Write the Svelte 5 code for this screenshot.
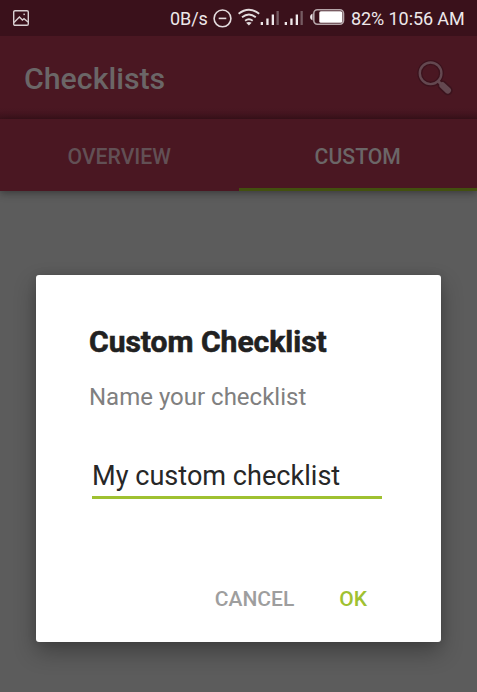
<script>
  let name = $state('My custom checklist');
</script>

<div class="screen">
  <div class="status">
    <svg class="pic" width="16" height="16" viewBox="0 0 16 16" fill="none" stroke="#d8cfd1" stroke-width="1.4">
      <rect x=".7" y=".7" width="14.6" height="14.6" rx="1.3" />
      <path d="M1 12.5 6.4 7l3 3 1.6-1.3 4 3.3" />
      <rect x="10.4" y="3.6" width="1.5" height="1.5" fill="#d8cfd1" stroke="none" />
    </svg>
    <span class="speed">0B/s</span>
    <svg class="icons" width="135" height="22" viewBox="212 7 135 22">
      <g fill="none" stroke="#e4dcde" stroke-width="1.6">
        <circle cx="222.5" cy="18.4" r="8.4" />
        <path d="M218.7 18.4h7.6" />
        <path d="M238.6 13.7q10.3-8 20.6 0M242 17.3q7-5.5 13.8 0M245.1 20.7q3.8-2.9 7.6 0" stroke-width="1.8" />
      </g>
      <path d="m246.1 22.8q2.8-1.5 5.6 0l-2.8 2.8z" fill="#e4dcde" />
      <g fill="#eee8ea">
        <rect x="260.7" y="22" width="2.3" height="3" />
        <rect x="266.3" y="18.5" width="2.3" height="6.5" />
        <rect x="271.7" y="14.5" width="2.3" height="10.5" />
        <rect x="284.7" y="22" width="2.3" height="3" />
        <rect x="290.3" y="18.5" width="2.3" height="6.5" />
        <rect x="295.7" y="14.5" width="2.3" height="10.5" />
      </g>
      <g fill="#755b62">
        <rect x="276.5" y="11" width="2.3" height="14" />
        <rect x="300.5" y="11" width="2.3" height="14" />
      </g>
      <path d="M312.5 13.5v7q-2.5-1-2.5-3.5t2.5-3.5z" fill="#eee8ea" />
      <rect x="313.8" y="9.8" width="29.7" height="14.4" rx="3.6" fill="none" stroke="#b5a5a9" stroke-width="1.6" />
      <rect x="319.3" y="11.2" width="23" height="11.6" rx="1.6" fill="#fff" />
    </svg>
    <span class="clock">82% 10:56 AM</span>
  </div>

  <header>
    <h1>Checklists</h1>
    <svg width="44" height="44" viewBox="412 56 44 44" fill="none">
      <g stroke="#3b131d" stroke-linecap="round">
        <circle cx="430.6" cy="73.3" r="10.8" stroke-width="5" />
        <path d="m438.5 81.5 3 3" stroke-width="6" />
        <path d="m442.3 85.3 5.6 5.2" stroke-width="9.5" />
      </g>
      <g stroke="#644850" stroke-linecap="round">
        <circle cx="430.6" cy="73.3" r="10.8" stroke-width="2.4" />
        <path d="m438.2 81.2 3 3" stroke-width="3" />
        <path d="m442.6 85.5 5.2 4.8" stroke-width="6.4" />
      </g>
    </svg>
  </header>

  <nav>
    <div class="tab">OVERVIEW</div>
    <div class="tab active">CUSTOM</div>
  </nav>

  <main>
    <section class="dialog">
      <h2>Custom Checklist</h2>
      <p>Name your checklist</p>
      <input bind:value={name} aria-label="Name your checklist" />
      <div class="actions">
        <button class="cancel">CANCEL</button>
        <button class="ok">OK</button>
      </div>
    </section>
  </main>
</div>

<style>
  .screen {
    width: 477px;
    height: 692px;
    overflow: hidden;
    display: flex;
    flex-direction: column;
    background: #5c5c5c;
    font-family: Roboto, sans-serif;
  }
  .status {
    height: 36px;
    flex: none;
    display: flex;
    align-items: center;
    background: #3a111b;
    color: #eee8ea;
    font-size: 18px;
    line-height: 36px;
    white-space: nowrap;
  }
  .pic { margin-left: 13px; }
  .speed { width: 42px; margin-left: 141px; padding-top: 2px; letter-spacing: -.1px; }
  .icons { flex: none; }
  .clock { margin-left: 4px; padding-top: 2px; letter-spacing: -.08px; }
  header {
    height: 83px;
    flex: none;
    box-sizing: border-box;
    display: flex;
    align-items: center;
    justify-content: space-between;
    padding: 0 21px 0 24px;
    background: linear-gradient(#4a1722 0 71px, #471621 76px, #3b121b 83px);
  }
  h1 {
    margin: 2px 0 0;
    font-size: 30.3px;
    line-height: 36px;
    font-weight: 500;
    color: #6b6667;
  }
  nav {
    position: relative;
    height: 72px;
    flex: none;
    display: flex;
    background: #4a1722;
    box-shadow: 0 2px 8px rgba(0, 0, 0, .38);
  }
  .tab {
    flex: 1;
    box-sizing: border-box;
    height: 72px;
    padding-top: 3px;
    text-align: center;
    font-size: 21.2px;
    font-weight: 500;
    line-height: 70px;
    color: #625055;
  }
  .active {
    color: #6b6667;
    border-bottom: 3px solid #43500f;
  }
  main { flex: 1; padding: 84px 36px 0; }
  .dialog {
    box-sizing: border-box;
    width: 405px;
    height: 367px;
    padding: 47px 59px 0 53px;
    background: #fff;
    border-radius: 3px;
    box-shadow: 0 10px 22px rgba(0, 0, 0, .3), 0 0 8px rgba(0, 0, 0, .12);
  }
  h2 {
    margin: 0;
    font-size: 30px;
    line-height: 40px;
    font-weight: 700;
    -webkit-text-stroke: .6px #212121;
    color: #212121;
    white-space: nowrap;
  }
  p {
    margin: 19px 0 0;
    font-size: 24px;
    line-height: 32px;
    color: #808080;
    white-space: nowrap;
  }
  input {
    display: block;
    box-sizing: border-box;
    width: 290px;
    height: 47px;
    margin: 39px 0 0 3px;
    padding: 4px 0 0;
    border: 0;
    border-bottom: 3px solid #9fc131;
    outline: 0;
    background: transparent;
    font: 27.1px/40px Roboto, sans-serif;
    color: #272727;
  }
  .actions {
    display: flex;
    justify-content: flex-end;
    gap: 45px;
    margin: 82px 15px 0 0;
  }
  button {
    border: 0;
    padding: 0;
    background: none;
    font: 500 21px/36px Roboto, sans-serif;
  }
  .cancel { color: #9e9e9e; }
  .ok { color: #9fc131; }
</style>
